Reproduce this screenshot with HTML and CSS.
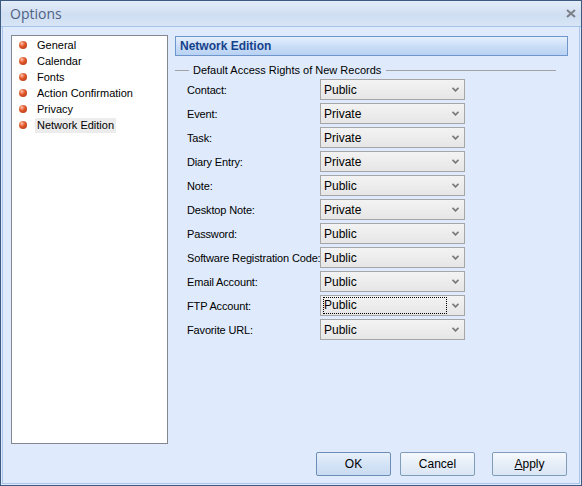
FILE: index.html
```html
<!doctype html>
<html>
  <head>
    <meta charset="UTF-8" />
    <title>Options</title>
    <link rel="stylesheet" href="styles.css">
  </head>
  <body>
    <div class="window">
      <div class="titlebar">
        <span class="title">Options</span>
        <svg class="close" width="10" height="9" viewBox="0 0 10 9">
          <path d="M1 1 L9 8 M9 1 L1 8" stroke="#7a7f88" stroke-width="2" fill="none" />
        </svg>
      </div>

      <div class="body">
        <div class="main">
          <ul class="nav">
            <li><i class="dot"></i><span>General</span></li>
            <li><i class="dot"></i><span>Calendar</span></li>
            <li><i class="dot"></i><span>Fonts</span></li>
            <li><i class="dot"></i><span>Action Confirmation</span></li>
            <li><i class="dot"></i><span>Privacy</span></li>
            <li class="selected"><i class="dot"></i><span>Network Edition</span></li>
          </ul>

          <div class="panel">
            <div class="panel-header">Network Edition</div>

            <div class="group-title">
              <span class="rule short"></span>
              <span class="group-text">Default Access Rights of New Records</span>
              <span class="rule"></span>
            </div>

            <div class="rows">
              <label>Contact:</label>
              <div class="combo"><span>Public</span><svg class="chev" width="7" height="5" viewBox="0 0 7 5"><path d="M0.5 0.8 L3.5 3.8 L6.5 0.8" stroke="#7b7b7b" stroke-width="1.8" fill="none" /></svg></div>

              <label>Event:</label>
              <div class="combo"><span>Private</span><svg class="chev" width="7" height="5" viewBox="0 0 7 5"><path d="M0.5 0.8 L3.5 3.8 L6.5 0.8" stroke="#7b7b7b" stroke-width="1.8" fill="none" /></svg></div>

              <label>Task:</label>
              <div class="combo"><span>Private</span><svg class="chev" width="7" height="5" viewBox="0 0 7 5"><path d="M0.5 0.8 L3.5 3.8 L6.5 0.8" stroke="#7b7b7b" stroke-width="1.8" fill="none" /></svg></div>

              <label>Diary Entry:</label>
              <div class="combo"><span>Private</span><svg class="chev" width="7" height="5" viewBox="0 0 7 5"><path d="M0.5 0.8 L3.5 3.8 L6.5 0.8" stroke="#7b7b7b" stroke-width="1.8" fill="none" /></svg></div>

              <label>Note:</label>
              <div class="combo"><span>Public</span><svg class="chev" width="7" height="5" viewBox="0 0 7 5"><path d="M0.5 0.8 L3.5 3.8 L6.5 0.8" stroke="#7b7b7b" stroke-width="1.8" fill="none" /></svg></div>

              <label>Desktop Note:</label>
              <div class="combo"><span>Private</span><svg class="chev" width="7" height="5" viewBox="0 0 7 5"><path d="M0.5 0.8 L3.5 3.8 L6.5 0.8" stroke="#7b7b7b" stroke-width="1.8" fill="none" /></svg></div>

              <label>Password:</label>
              <div class="combo"><span>Public</span><svg class="chev" width="7" height="5" viewBox="0 0 7 5"><path d="M0.5 0.8 L3.5 3.8 L6.5 0.8" stroke="#7b7b7b" stroke-width="1.8" fill="none" /></svg></div>

              <label>Software Registration Code:</label>
              <div class="combo"><span>Public</span><svg class="chev" width="7" height="5" viewBox="0 0 7 5"><path d="M0.5 0.8 L3.5 3.8 L6.5 0.8" stroke="#7b7b7b" stroke-width="1.8" fill="none" /></svg></div>

              <label>Email Account:</label>
              <div class="combo"><span>Public</span><svg class="chev" width="7" height="5" viewBox="0 0 7 5"><path d="M0.5 0.8 L3.5 3.8 L6.5 0.8" stroke="#7b7b7b" stroke-width="1.8" fill="none" /></svg></div>

              <label>FTP Account:</label>
              <div class="combo focused"><span>Public</span><svg class="chev" width="7" height="5" viewBox="0 0 7 5"><path d="M0.5 0.8 L3.5 3.8 L6.5 0.8" stroke="#7b7b7b" stroke-width="1.8" fill="none" /></svg></div>

              <label>Favorite URL:</label>
              <div class="combo"><span>Public</span><svg class="chev" width="7" height="5" viewBox="0 0 7 5"><path d="M0.5 0.8 L3.5 3.8 L6.5 0.8" stroke="#7b7b7b" stroke-width="1.8" fill="none" /></svg></div>
            </div>
          </div>
        </div>

        <div class="buttons">
          <button class="btn default">OK</button>
          <button class="btn cancel">Cancel</button>
          <button class="btn apply"><u>A</u>pply</button>
        </div>
      </div>
    </div>
  </body>
</html>
```

FILE: styles.css
```css
:root {
  --frame: #3d5a80;
  --bg: #dfebfc;
  --header-text: #15428b;
  --text: #000;
}

* {
  margin: 0;
  padding: 0;
  box-sizing: border-box;
}

body {
  font-family: 'Liberation Sans', Arial, sans-serif;
  font-size: 11px;
  color: var(--text);
  background: var(--bg);
}

.window {
  width: 582px;
  height: 486px;
  border: 1px solid var(--frame);
  display: flex;
  flex-direction: column;
  background: var(--bg);
}

.titlebar {
  height: 26px;
  flex: none;
  display: flex;
  align-items: center;
  justify-content: space-between;
  padding: 0 5px 1px 9px;
  background: linear-gradient(#e4edf8, #d0def2 55%, #d7e5f6);
  border-bottom: 1px solid #a4c3e9;
}

.title {
  font-family: 'Open Sans', 'Noto Sans', sans-serif;
  font-size: 14px;
  color: #4e6283;
}

.close {
  display: block;
}

.body {
  flex: 1;
  display: flex;
  flex-direction: column;
  margin: 0 1px 1px;
  border: 1px solid #a9c5ea;
  border-top: none;
  padding: 8px 11px 7px 8px;
}

.main {
  height: 409px;
  display: flex;
  gap: 7px;
}

/* left list */
.nav {
  width: 157px;
  list-style: none;
  background: #fff;
  border: 1px solid #828790;
  padding-top: 1px;
}

.nav li {
  height: 16px;
  display: flex;
  align-items: center;
  padding-left: 7px;
}

.dot {
  width: 8px;
  height: 8px;
  border-radius: 50%;
  margin-right: 8px;
  background: radial-gradient(circle at 35% 30%, #fbc3ac 0, #e2592c 40%, #a5300d 100%);
}

.nav li span {
  padding: 0 2px;
  line-height: 15px;
}

.nav li.selected span {
  background: #ececec;
}

/* right panel */
.panel {
  flex: 1;
}

.panel-header {
  height: 20px;
  margin-top: 1px;
  border: 1px solid #6f96cb;
  background: linear-gradient(#e6f0fd, #c6dbf6 60%, #b9d2f3);
  color: var(--header-text);
  font-weight: bold;
  font-size: 12px;
  padding-left: 4px;
  line-height: 18px;
}

.group-title {
  display: flex;
  align-items: center;
  margin-top: 7px;
  height: 14px;
  margin-bottom: 2px;
  margin-right: 12px;
}

.rule {
  flex: 1;
  height: 1px;
  background: #a3a3a3;
}

.rule.short {
  flex: none;
  width: 14px;
}

.group-text {
  margin: 0 5px 0 4px;
}

.rows {
  display: grid;
  grid-template-columns: 133px 145px;
  row-gap: 3px;
  padding-left: 12px;
  align-items: center;
}

.rows label {
  white-space: nowrap;
  letter-spacing: -0.15px;
}

.combo {
  height: 21px;
  display: flex;
  align-items: center;
  justify-content: space-between;
  border: 1px solid #a6a6a6;
  background: linear-gradient(#f3f3f3, #e6e6e6);
  padding: 0 5px 0 3px;
  font-size: 12px;
}

.combo.focused span {
  outline: 1px dotted #000;
  width: 122px;
  line-height: 15px;
}

.chev {
  display: block;
}

/* bottom buttons */
.buttons {
  margin-top: 8px;
  height: 24px;
  display: flex;
  justify-content: flex-end;
  padding-right: 1px;
}

.btn {
  width: 75px;
  height: 24px;
  font-family: inherit;
  font-size: 12px;
  color: #000;
  border: 1px solid #7f9db9;
  border-radius: 2px;
  background: linear-gradient(#f6f9fd, #e6eef8 50%, #dbe6f4);
}

.btn.default {
  border-color: #6c8db5;
  background: linear-gradient(#e8f1fc, #d4e3f6 50%, #c9dbf2);
}

.btn.cancel {
  margin-left: 9px;
}

.btn.apply {
  margin-left: 17px;
}

.btn u {
  text-decoration: underline;
}
```
